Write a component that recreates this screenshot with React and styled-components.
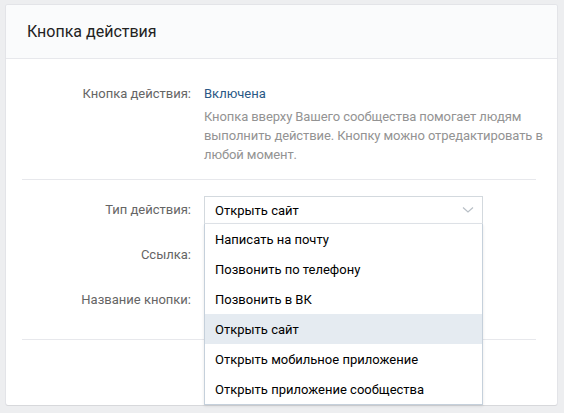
import React from 'react'
import styled, { createGlobalStyle } from 'styled-components'

const GlobalStyle = createGlobalStyle`
  html, body {
    margin: 0;
    padding: 0;
    background: #edeef0;
    font-family: Roboto, "Open Sans", Arial, sans-serif;
    -webkit-font-smoothing: antialiased;
  }
`

const actions = [
  'Написать на почту',
  'Позвонить по телефону',
  'Позвонить в ВК',
  'Открыть сайт',
  'Открыть мобильное приложение',
  'Открыть приложение сообщества',
]

function Chevron() {
  return (
    <svg width="12" height="8" viewBox="0 0 12 8">
      <polyline points="1,1.5 6,6 11,1.5" fill="none" stroke="#b8bfc6" strokeWidth="1.2" />
    </svg>
  )
}

function App() {
  const selected = 'Открыть сайт'

  return (
    <>
      <GlobalStyle />
      <Page>
        <Card>
          <Header>Кнопка действия</Header>

          <Section $top={26} $bottom={15}>
            <Row>
              <Label>Кнопка действия:</Label>
              <Value>
                <Status>Включена</Status>
                <Hint>
                  Кнопка вверху Вашего сообщества помогает людям выполнить
                  действие. Кнопку можно отредактировать в любой момент.
                </Hint>
              </Value>
            </Row>
          </Section>

          <Divider />

          <Section $top={16} $bottom={25}>
            <Fields>
              <FieldRow>
                <Label>Тип действия:</Label>
                <SelectWrap>
                  <Select>
                    <span>{selected}</span>
                    <Chevron />
                  </Select>
                  <Menu>
                    {actions.map((a) => (
                      <MenuItem key={a} $active={a === selected}>
                        {a}
                      </MenuItem>
                    ))}
                  </Menu>
                </SelectWrap>
              </FieldRow>
              <FieldRow>
                <Label>Ссылка:</Label>
                <Input />
              </FieldRow>
              <FieldRow>
                <Label>Название кнопки:</Label>
                <Input />
              </FieldRow>
            </Fields>
          </Section>

          <Divider />
          <Footer />
        </Card>
      </Page>
    </>
  )
}

const Page = styled.div`
  padding: 5px 7px 8px 6px;
`

const Card = styled.div`
  background: #fff;
  border-radius: 2px;
  box-shadow: 0 1px 0 0 #d7d8db, 0 0 0 1px #e3e4e8;
  height: 400px;
  box-sizing: border-box;
`

const Header = styled.div`
  height: 54px;
  box-sizing: border-box;
  padding: 0 21px;
  display: flex;
  align-items: center;
  background: #fafbfc;
  border-bottom: 1px solid #e7e8ec;
  border-radius: 2px 2px 0 0;
  font-size: 16px;
  color: #222;
`

const Section = styled.div`
  padding-top: ${(p) => p.$top}px;
  padding-bottom: ${(p) => p.$bottom}px;
`

const Row = styled.div`
  display: flex;
  align-items: flex-start;
`

const Fields = styled.div`
  display: flex;
  flex-direction: column;
  gap: 17px;
`

const FieldRow = styled.div`
  display: flex;
  align-items: center;
  height: 28px;
`

const Label = styled.div`
  width: 198px;
  flex-shrink: 0;
  padding-right: 13px;
  box-sizing: border-box;
  text-align: right;
  font-size: 13px;
  line-height: 18px;
  color: #656565;
`

const Value = styled.div`
  width: 346px;
`

const Status = styled.div`
  font-size: 13px;
  line-height: 18px;
  color: #2a5885;
`

const Hint = styled.div`
  margin-top: 4px;
  font-size: 13px;
  line-height: 19px;
  letter-spacing: -0.1px;
  color: #939393;
`

const Divider = styled.div`
  height: 1px;
  background: #e7e8ec;
  margin: 0 21px 0 16px;
`

const SelectWrap = styled.div`
  position: relative;
  width: 279px;
  height: 28px;
`

const Select = styled.div`
  height: 28px;
  box-sizing: border-box;
  border: 1px solid #d3d9de;
  border-bottom-color: #e1e5ea;
  background: #fff;
  display: flex;
  align-items: center;
  justify-content: space-between;
  padding: 0 8px 0 10px;
  font-size: 13px;
  color: #000;
`

const Input = styled.div`
  width: 279px;
  height: 28px;
  box-sizing: border-box;
  border: 1px solid #d3d9de;
`

const Menu = styled.div`
  position: absolute;
  top: 28px;
  left: 0;
  right: 0;
  z-index: 2;
  background: #fff;
  border: 1px solid #c5d0db;
  border-top: none;
  box-shadow: 0 1px 3px rgba(0, 0, 0, 0.1);
`

const MenuItem = styled.div`
  height: 30px;
  display: flex;
  align-items: center;
  padding: 0 10px;
  font-size: 13px;
  color: #000;
  background: ${(p) => (p.$active ? '#e5ebf1' : '#fff')};
`

const Footer = styled.div`
  height: 65px;
`

export default App
